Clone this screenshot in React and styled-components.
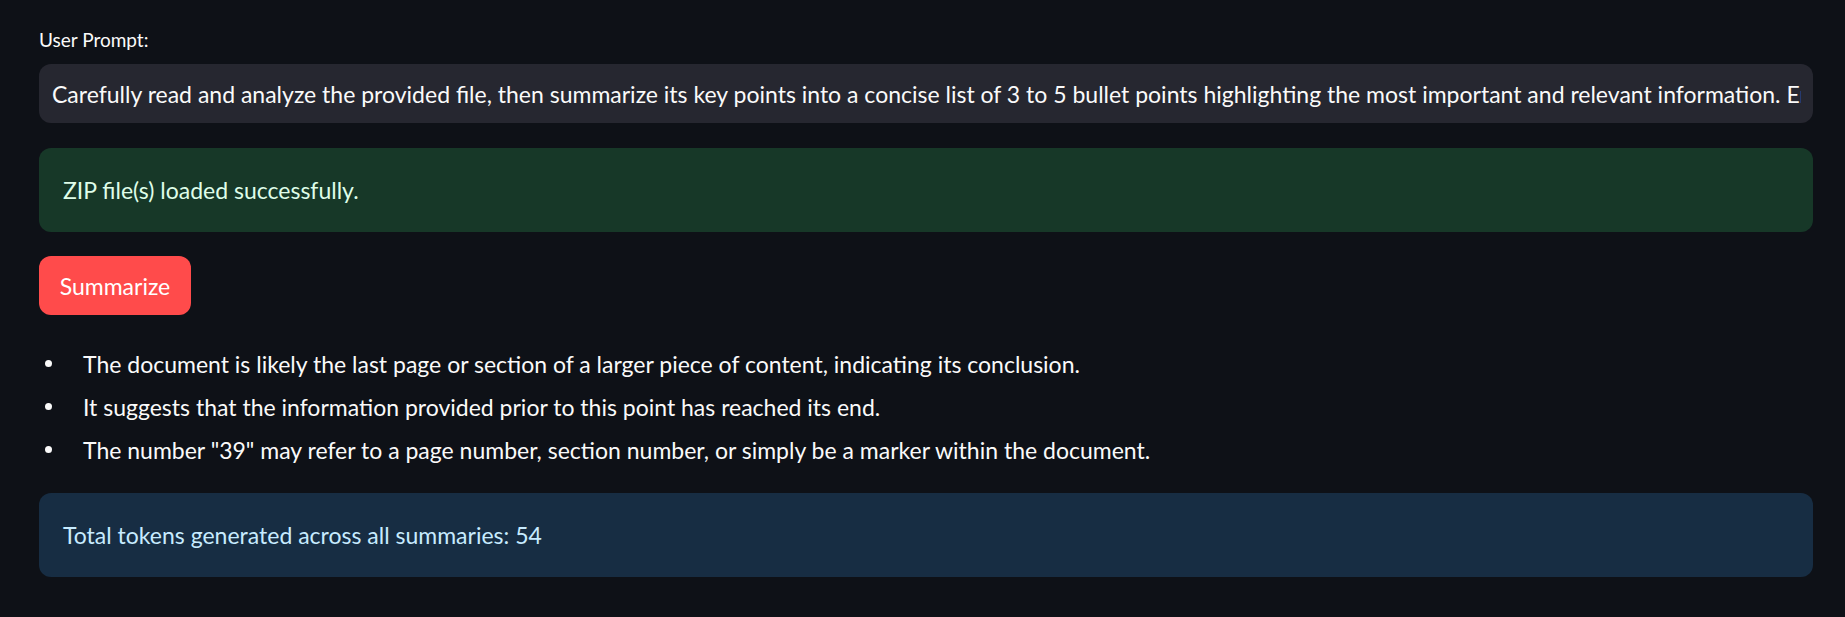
import React from "react";
import styled, { createGlobalStyle } from "styled-components";

const Global = createGlobalStyle`
  html, body {
    margin: 0;
    padding: 0;
    background: #0e1117;
  }
  body {
    font-family: Lato, "Liberation Sans", sans-serif;
    color: #fafafa;
  }
  * { box-sizing: border-box; }
`;

const Page = styled.main`
  min-height: 617px;
  background: #0e1117;
  padding: 25px 32px 40px 39px;
  display: flex;
  flex-direction: column;
`;

const Label = styled.label`
  display: block;
  height: 30px;
  line-height: 30px;
  font-size: 19px;
  color: #fafafa;
  margin-bottom: 9px;
`;

const TextInput = styled.input`
  display: block;
  width: 100%;
  height: 59px;
  border: none;
  outline: none;
  border-radius: 12px;
  background: #262730;
  color: #fafafa;
  font-family: Lato, "Liberation Sans", sans-serif;
  font-size: 23px;
  padding: 0 12px 0 13px;
`;

const Alert = styled.div`
  height: 84px;
  border-radius: 12px;
  display: flex;
  align-items: center;
  padding: 0 24px;
  font-size: 23px;
  margin-top: ${(p) => p.$mt}px;
  background: ${(p) => (p.$kind === "success" ? "#173828" : "#172d43")};
  color: ${(p) => (p.$kind === "success" ? "#dffde9" : "#c7ebff")};
`;

const Button = styled.button`
  align-self: flex-start;
  width: 152px;
  height: 59px;
  margin-top: 24px;
  border: none;
  border-radius: 12px;
  background: #ff4b4b;
  color: #ffffff;
  font-family: Lato, "Liberation Sans", sans-serif;
  font-size: 23px;
  display: flex;
  align-items: center;
  justify-content: center;
  cursor: pointer;
`;

const List = styled.ul`
  list-style: none;
  margin: 27px 0 0;
  padding: 0;
`;

const Item = styled.li`
  display: flex;
  align-items: center;
  height: 43px;
  font-size: 23px;
  color: #fafafa;
`;

const Dot = styled.span`
  width: 7px;
  height: 7px;
  border-radius: 50%;
  background: #fafafa;
  margin-left: 6px;
  margin-right: 31px;
  flex: none;
`;

const bullets = [
  "The document is likely the last page or section of a larger piece of content, indicating its conclusion.",
  "It suggests that the information provided prior to this point has reached its end.",
  'The number "39" may refer to a page number, section number, or simply be a marker within the document.',
];

export default function App() {
  return (
    <>
      <Global />
      <Page>
        <Label htmlFor="prompt">User Prompt:</Label>
        <TextInput
          id="prompt"
          readOnly
          defaultValue="Carefully read and analyze the provided file, then summarize its key points into a concise list of 3 to 5 bullet points highlighting the most important and relevant information. Ensure the summary is clear and easy to understand."
        />
        <Alert $kind="success" $mt={25}>ZIP file(s) loaded successfully.</Alert>
        <Button>Summarize</Button>
        <List>
          {bullets.map((b) => (
            <Item key={b}>
              <Dot />
              {b}
            </Item>
          ))}
        </List>
        <Alert $kind="info" $mt={22}>Total tokens generated across all summaries: 54</Alert>
      </Page>
    </>
  );
}
